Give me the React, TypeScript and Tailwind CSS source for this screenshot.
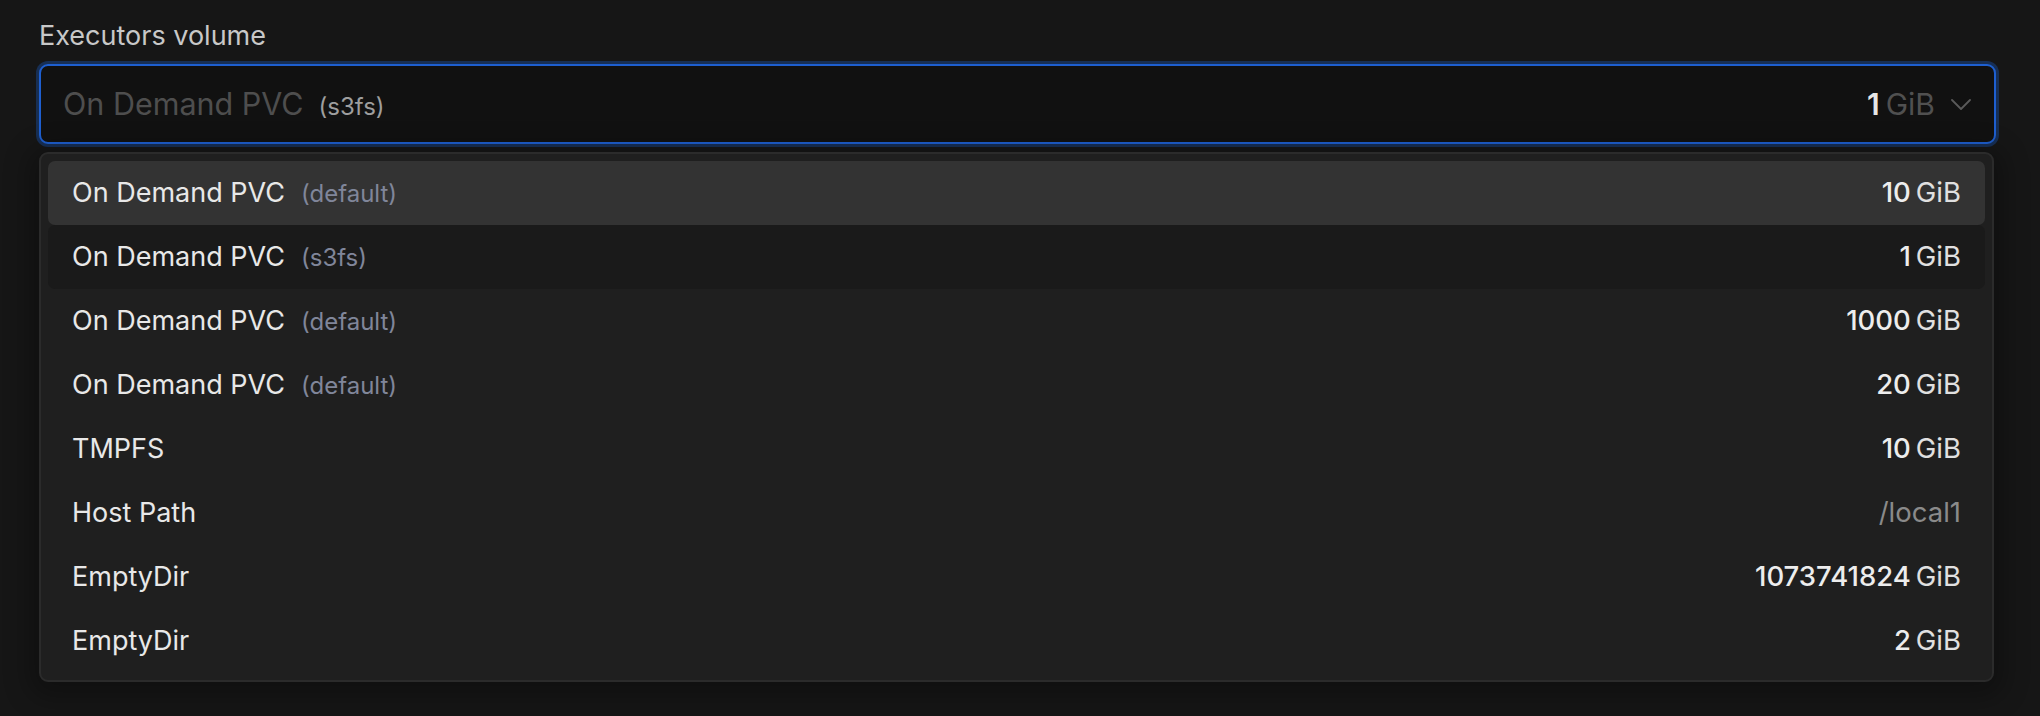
import React from "react";

type Item = { name: string; tag?: string; num?: string; unit?: string; path?: string };

const items: Item[] = [
  { name: "On Demand PVC", tag: "(default)", num: "10", unit: "GiB" },
  { name: "On Demand PVC", tag: "(s3fs)", num: "1", unit: "GiB" },
  { name: "On Demand PVC", tag: "(default)", num: "1000", unit: "GiB" },
  { name: "On Demand PVC", tag: "(default)", num: "20", unit: "GiB" },
  { name: "TMPFS", num: "10", unit: "GiB" },
  { name: "Host Path", path: "/local1" },
  { name: "EmptyDir", num: "1073741824", unit: "GiB" },
  { name: "EmptyDir", num: "2", unit: "GiB" },
];

export default function App() {
  return (
    <div
      className="w-full h-[716px] bg-[#161616] pt-[20px] pl-[39px] pr-[44px] overflow-hidden"
      style={{ fontFamily: "Inter, 'Noto Sans', sans-serif" }}
    >
      <div className="text-[27px] leading-[32px] text-[#c8c8c8]">Executors volume</div>

      <div className="mt-3 h-[80px] rounded-[9px] border-2 border-[#1e5fd0] bg-[#111111] shadow-[0_0_0_3px_#172f55] flex items-center pl-[22px] pr-[23px]">
        <div className="flex items-baseline flex-1 min-w-0">
          <span className="text-[30.5px] text-[#4e4e4e]">On Demand PVC</span>
          <span className="ml-[15px] text-[24px] text-[#9e9e9e]">(s3fs)</span>
        </div>
        <div className="flex items-baseline">
          <span className="text-[30px] font-semibold text-[#e6e6e6]">1</span>
          <span className="ml-[6px] text-[30px] text-[#505050]">GiB</span>
        </div>
        <svg width="20" height="11" viewBox="0 0 20 11" className="ml-[16px]" fill="none">
          <polyline points="1,1 10,10 19,1" stroke="#5a5a5a" strokeWidth="1.8" strokeLinecap="round" strokeLinejoin="round" />
        </svg>
      </div>

      <div className="mt-[8px] mr-[2px] rounded-[9px] border-2 border-[#2b2b2b] bg-[#1f1f1f] p-[7px] shadow-[0_6px_26px_10px_rgba(0,0,0,0.28)]">
        {items.map((it, i) => (
          <div
            key={i}
            className={
              "h-[64px] rounded-[7px] flex items-center justify-between px-[24px] " +
              (i === 0 ? "bg-[#333333]" : i === 1 ? "bg-[#1a1a1a]" : "")
            }
          >
            <div className="flex items-baseline">
              <span className="text-[27px] text-[#e8e8e8]">{it.name}</span>
              {it.tag && <span className="ml-[16px] text-[24px] text-[#80869a]">{it.tag}</span>}
            </div>
            {it.path ? (
              <span className="text-[27.5px] text-[#8a8a8a]">{it.path}</span>
            ) : (
              <div className="flex items-baseline">
                <span className="text-[27.5px] font-medium text-[#ededed]">{it.num}</span>
                <span className="ml-[5px] text-[27.5px] text-[#e0e0e0]">{it.unit}</span>
              </div>
            )}
          </div>
        ))}
      </div>
    </div>
  );
}
